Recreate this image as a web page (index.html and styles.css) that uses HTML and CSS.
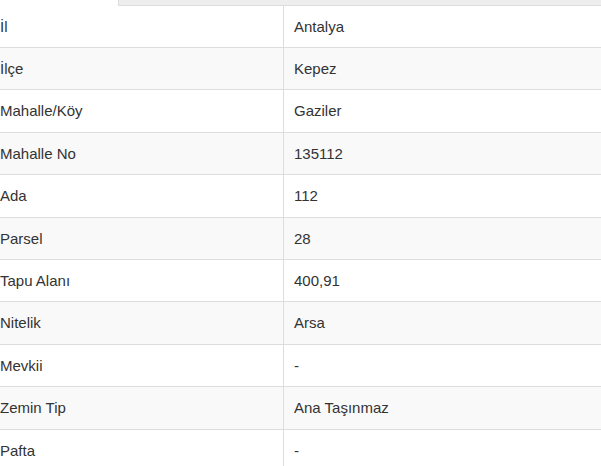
FILE: index.html
```html
<!DOCTYPE html>
<html lang="tr">
<head>
<meta charset="utf-8">
<link rel="stylesheet" href="styles.css">
</head>
<body>
<div class="page">
  <div class="tabbar"></div>
  <table class="info">
    <tbody>
      <tr><td class="k">İl</td><td class="v">Antalya</td></tr>
      <tr><td class="k">İlçe</td><td class="v">Kepez</td></tr>
      <tr><td class="k">Mahalle/Köy</td><td class="v">Gaziler</td></tr>
      <tr><td class="k">Mahalle No</td><td class="v">135112</td></tr>
      <tr><td class="k">Ada</td><td class="v">112</td></tr>
      <tr><td class="k">Parsel</td><td class="v">28</td></tr>
      <tr><td class="k">Tapu Alanı</td><td class="v">400,91</td></tr>
      <tr><td class="k">Nitelik</td><td class="v">Arsa</td></tr>
      <tr><td class="k">Mevkii</td><td class="v">-</td></tr>
      <tr><td class="k">Zemin Tip</td><td class="v">Ana Taşınmaz</td></tr>
      <tr><td class="k">Pafta</td><td class="v">-</td></tr>
    </tbody>
  </table>
</div>
</body>
</html>
```
FILE: styles.css
```css
html, body {
  margin: 0;
  padding: 0;
  background: #fff;
  overflow: hidden;
}
.page {
  width: 601px;
  height: 466px;
  overflow: hidden;
  font-family: "Liberation Sans", Arial, sans-serif;
  font-size: 15px;
  color: #333;
}
.tabbar {
  margin-left: 118px;
  height: 4.5px;
  background: #eeeeee;
  border-left: 1px solid #dddddd;
  border-bottom: 1px solid #dddddd;
  box-sizing: content-box;
}
.info {
  margin-left: -10px;
  width: 640px;
  border-collapse: collapse;
  border-spacing: 0;
}
.info td {
  padding: 10px;
  line-height: 1.42857;
  border-bottom: 1px solid #dddddd;
  vertical-align: top;
  white-space: nowrap;
}
.info tr:nth-child(even) td {
  background: #f9f9f9;
}
.info td.k {
  width: 273px;
  border-right: 1px solid #dddddd;
}
```
